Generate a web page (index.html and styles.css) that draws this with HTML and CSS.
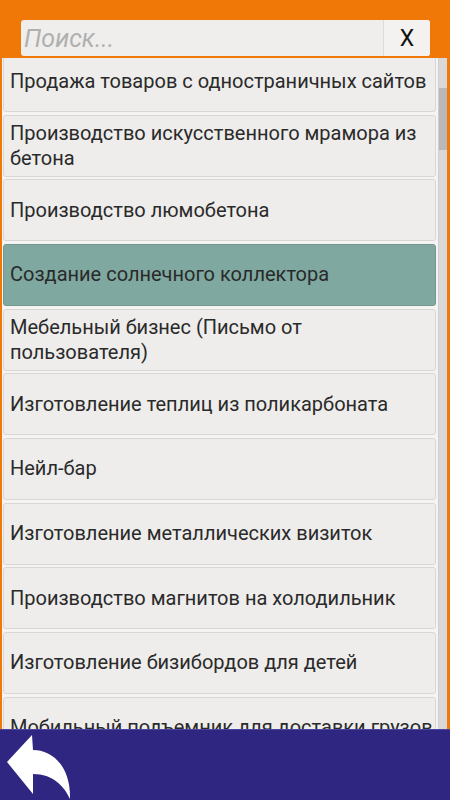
FILE: index.html
```html
<!DOCTYPE html>
<html lang="ru">
<head>
    <meta charset="UTF-8">
    <meta name="viewport" content="width=device-width, initial-scale=1.0">
    <title>Бизнес идеи</title>
    <link rel="stylesheet" href="styles.css">
</head>
<body>
    <div class="app">
        <!-- строка поиска -->
        <div class="topbar">
            <div class="search-box">
                <input class="search-input" type="text" placeholder="Поиск...">
                <button class="clear-btn">X</button>
            </div>
        </div>

        <div class="content">
            <div class="list-wrap">
                <ul class="list">
                    <li class="item">Продажа товаров с одностраничных сайтов</li>
                    <li class="item">Производство искусственного мрамора из бетона</li>
                    <li class="item">Производство люмобетона</li>
                    <li class="item selected">Создание солнечного коллектора</li>
                    <li class="item">Мебельный бизнес (Письмо от пользователя)</li>
                    <li class="item">Изготовление теплиц из поликарбоната</li>
                    <li class="item">Нейл-бар</li>
                    <li class="item">Изготовление металлических визиток</li>
                    <li class="item">Производство магнитов на холодильник</li>
                    <li class="item">Изготовление бизибордов для детей</li>
                    <li class="item">Мобильный подъемник для доставки грузов</li>
                </ul>
            </div>
            <div class="scrollbar">
                <div class="thumb"></div>
            </div>
        </div>

        <!-- нижняя панель -->
        <div class="footer">
            <button class="back-btn">
                <svg width="80" height="71" viewBox="0 0 80 71">
                    <path d="M7 32 L32 5 L33 20 C52 20 71 36 70 69 C64 56 53 44 33 44 L33 64 Z" fill="#fff"/>
                </svg>
            </button>
        </div>
    </div>
</body>
</html>
```

FILE: styles.css
```css
html, body {
    margin: 0;
    height: 100%;
    overflow: hidden;
    background-color: #ef7806;
    font-family: Roboto, "Noto Sans", sans-serif;
}

.app {
    display: flex;
    flex-direction: column;
    height: 100vh;
}

.topbar {
    height: 58px;
    box-sizing: border-box;
    padding: 20px 20px 2px 21px;
}

.search-box {
    display: flex;
    height: 36px;
    background-color: #efeeec;
    border-radius: 3px;
}

.search-input {
    flex: 1;
    min-width: 0;
    border: none;
    outline: none;
    background: transparent;
    padding: 0 3px;
    font-family: Roboto, sans-serif;
    font-size: 25px;
    font-style: italic;
    color: #333;
}

.search-input::placeholder {
    color: #b0b0b0;
}

.clear-btn {
    width: 47px;
    border: none;
    border-left: 1px solid #dcdcdc;
    border-radius: 0 3px 3px 0;
    background-color: #f3f2f0;
    font-family: Roboto, sans-serif;
    font-size: 23px;
    color: #111;
    padding: 0;
}

.content {
    flex: 1;
    display: flex;
    min-height: 0;
    margin: 0 3px 0 2px;
    background-color: #f5f4f2;
}

.list-wrap {
    flex: 1;
    overflow: hidden;
}

.list {
    list-style: none;
    margin: -8px 0 0 1px;
    padding: 0;
    display: flex;
    flex-direction: column;
    gap: 2.67px;
}

.item {
    flex-shrink: 0;
    height: 62px;
    box-sizing: border-box;
    display: flex;
    align-items: center;
    padding: 0 1px 0 6px;
    background-color: #eeedeb;
    border: 1px solid #d9d7d4;
    border-radius: 3px;
    font-size: 20px;
    line-height: 25px;
    color: #2a2a2a;
}

.item.selected {
    background-color: #7fa8a0;
    border-color: #73998f;
}

.scrollbar {
    width: 8px;
    margin-left: 2px;
    background-color: #d9d9d9;
    border-left: 1px solid #cfcfcf;
}

.thumb {
    height: 62px;
    margin-top: 30px;
    background-color: #b9b9b9;
}

.footer {
    height: 71px;
    flex-shrink: 0;
    background-color: #2e2681;
    border-top: 1px solid #4b44a0;
    box-sizing: border-box;
}

.back-btn {
    border: none;
    background: none;
    padding: 0;
    display: block;
}

.back-btn svg {
    display: block;
}
```
